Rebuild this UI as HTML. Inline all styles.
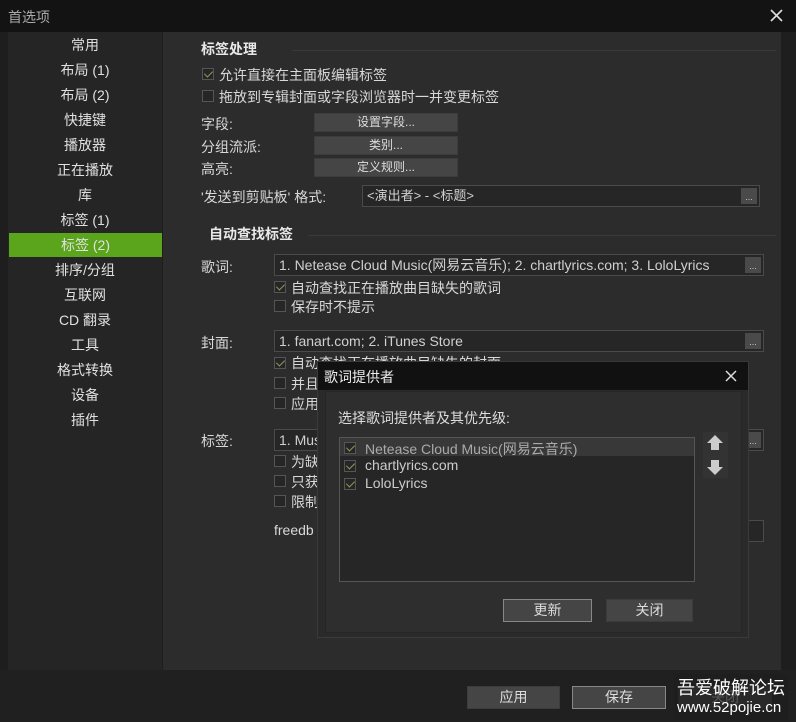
<!DOCTYPE html>
<html><head><meta charset="utf-8"><style>
*{margin:0;padding:0;box-sizing:border-box}
body{width:796px;height:722px;background:#1e1e1e;font-family:"Liberation Sans","Noto Sans CJK SC",sans-serif;font-size:13px;color:#d8d8d8;position:relative;overflow:hidden}
.a{position:absolute;white-space:nowrap}
.side{position:absolute;left:8px;top:32px;width:154px;height:638px;background:#252525}
.si{position:absolute;left:0;width:154px;text-align:center;font-size:14px;color:#e0e0e0;height:24px;line-height:24px}
.main{position:absolute;left:163px;top:32px;width:618px;height:638px;background:#2c2c2c}
.cb{position:absolute;width:12px;height:12px;border:1px solid #555;background:#262626}
.cb.c::after{content:"";position:absolute;left:3px;top:0px;width:4px;height:7px;border:solid #8a9a5a;border-width:0 1.5px 1.5px 0;transform:rotate(45deg)}
.btn{position:absolute;background:#454545;border:1px solid #3c3c3c;color:#ddd;text-align:center;font-size:12px}
.inp{position:absolute;background:#262626;border:1px solid #4a4a4a;color:#d0d0d0;font-size:14px;padding-left:4px;line-height:20px;height:22px}
.dots{position:absolute;right:2px;top:2px;width:16px;height:16px;background:#4a4a4a;font-size:9px;line-height:18px;text-align:center;color:#ccc}
.hr{position:absolute;height:1px;background:#3a3a3a}
</style></head><body>
<div class="a" style="left:0;top:0;width:796px;height:32px;background:#131313"></div>
<div class="a" style="left:8px;top:7px;font-size:14px;color:#aaa">首选项</div>
<svg class="a" style="left:770px;top:9px" width="13" height="13" viewBox="0 0 13 13"><path d="M1 1L12 12M12 1L1 12" stroke="#ddd" stroke-width="1.6"/></svg>
<div class="side">
<div class="si" style="top:1px">常用</div>
<div class="si" style="top:26px">布局 (1)</div>
<div class="si" style="top:51px">布局 (2)</div>
<div class="si" style="top:76px">快捷键</div>
<div class="si" style="top:101px">播放器</div>
<div class="si" style="top:126px">正在播放</div>
<div class="si" style="top:151px">库</div>
<div class="si" style="top:176px">标签 (1)</div>
<div class="si" style="top:201px;background:#5ba51c;left:1px;width:153px">标签 (2)</div>
<div class="si" style="top:226px">排序/分组</div>
<div class="si" style="top:251px">互联网</div>
<div class="si" style="top:276px">CD 翻录</div>
<div class="si" style="top:301px">工具</div>
<div class="si" style="top:326px">格式转换</div>
<div class="si" style="top:351px">设备</div>
<div class="si" style="top:376px">插件</div>
</div>
<div class="main"></div>
<div class="a" style="left:201px;top:39px;font-size:14px;font-weight:bold;color:#e8e8e8">标签处理</div>
<div class="hr" style="left:292px;top:50px;width:484px"></div>
<div class="cb c" style="left:202px;top:68px"></div><div class="a" style="left:219px;top:65px;font-size:14px">允许直接在主面板编辑标签</div>
<div class="cb" style="left:202px;top:90px"></div><div class="a" style="left:219px;top:87px;font-size:14px">拖放到专辑封面或字段浏览器时一并变更标签</div>
<div class="a" style="left:201px;top:114px;font-size:14px">字段:</div>
<div class="btn" style="left:314px;top:113px;width:144px;height:19px;line-height:17px">设置字段...</div>
<div class="a" style="left:201px;top:137px;font-size:14px">分组流派:</div>
<div class="btn" style="left:314px;top:136px;width:144px;height:19px;line-height:17px">类别...</div>
<div class="a" style="left:201px;top:159px;font-size:14px">高亮:</div>
<div class="btn" style="left:314px;top:158px;width:144px;height:19px;line-height:17px">定义规则...</div>
<div class="a" style="left:201px;top:187px;font-size:14px">'发送到剪贴板' 格式:</div>
<div class="inp" style="left:362px;top:185px;width:398px;height:22px;font-size:13px">&lt;演出者&gt; - &lt;标题&gt;<div class="dots">...</div></div>
<div class="a" style="left:209px;top:224px;font-size:14px;font-weight:bold;color:#e8e8e8">自动查找标签</div>
<div class="hr" style="left:308px;top:235px;width:468px"></div>
<div class="a" style="left:201px;top:257px;font-size:14px">歌词:</div>
<div class="inp" style="left:274px;top:254px;width:490px">1. Netease Cloud Music(网易云音乐); 2. chartlyrics.com; 3. LoloLyrics<div class="dots">...</div></div>
<div class="cb c" style="left:274px;top:281px"></div><div class="a" style="left:291px;top:278px;font-size:14px">自动查找正在播放曲目缺失的歌词</div>
<div class="cb" style="left:274px;top:300px"></div><div class="a" style="left:291px;top:297px;font-size:14px">保存时不提示</div>
<div class="a" style="left:201px;top:333px;font-size:14px">封面:</div>
<div class="inp" style="left:274px;top:330px;width:490px">1. fanart.com; 2. iTunes Store<div class="dots">...</div></div>
<div class="cb c" style="left:274px;top:357px"></div><div class="a" style="left:291px;top:353px;font-size:14px">自动查找正在播放曲目缺失的封面</div>
<div class="cb" style="left:274px;top:377px"></div><div class="a" style="left:291px;top:374px;font-size:14px">并且</div>
<div class="cb" style="left:274px;top:397px"></div><div class="a" style="left:291px;top:394px;font-size:14px">应用</div>
<div class="a" style="left:201px;top:431px;font-size:14px">标签:</div>
<div class="inp" style="left:274px;top:429px;width:490px">1. Music<div class="dots">...</div></div>
<div class="cb" style="left:274px;top:455px"></div><div class="a" style="left:291px;top:452px;font-size:14px">为缺</div>
<div class="cb" style="left:274px;top:475px"></div><div class="a" style="left:291px;top:472px;font-size:14px">只获</div>
<div class="cb" style="left:274px;top:495px"></div><div class="a" style="left:291px;top:492px;font-size:14px">限制</div>
<div class="a" style="left:274px;top:522px;font-size:14px">freedb</div>
<div class="inp" style="left:700px;top:520px;width:64px"></div>

<div class="a" style="left:0;top:670px;width:796px;height:52px;background:#202020"></div>
<div class="btn" style="left:467px;top:686px;width:93px;height:23px;line-height:21px;font-size:14px">应用</div>
<div class="btn" style="left:572px;top:686px;width:94px;height:23px;line-height:21px;font-size:14px;border-color:#888">保存</div>
<div class="btn" style="left:678px;top:686px;width:94px;height:23px;line-height:21px;font-size:14px">关闭</div>
<div class="a" style="left:674px;top:674px;width:114px;height:46px;background:rgba(30,30,30,.7)"></div>
<div class="a" style="left:677px;top:674px;font-size:18px;color:#fff">吾爱破解论坛</div>
<div class="a" style="left:677px;top:699px;font-size:15px;color:#fff">www.52pojie.cn</div>

<!-- dialog -->
<div class="a" style="left:317px;top:361px;width:432px;height:277px;background:#2a2a2a;border:1px solid #3a3a3a"></div>
<div class="a" style="left:318px;top:362px;width:430px;height:28px;background:#111"></div>
<div class="a" style="left:324px;top:367px;font-size:14px;color:#eee">歌词提供者</div>
<svg class="a" style="left:725px;top:370px" width="12" height="12" viewBox="0 0 12 12"><path d="M1 1L11 11M11 1L1 11" stroke="#ddd" stroke-width="1.5"/></svg>
<div class="a" style="left:325px;top:391px;width:417px;height:242px;background:#2e2e2e;border:1px solid #262626"></div>
<div class="a" style="left:338px;top:408px;font-size:14px;color:#ddd">选择歌词提供者及其优先级:</div>
<div class="a" style="left:339px;top:437px;width:356px;height:145px;background:#262626;border:1px solid #555"></div>
<div class="a" style="left:340px;top:438px;width:354px;height:18px;background:#383838"></div>
<div class="cb c" style="left:344px;top:442px"></div><div class="a" style="left:365px;top:439px;font-size:14px;color:#aaa">Netease Cloud Music(网易云音乐)</div>
<div class="cb c" style="left:344px;top:460px"></div><div class="a" style="left:365px;top:457px;font-size:14px;color:#ccc">chartlyrics.com</div>
<div class="cb c" style="left:344px;top:478px"></div><div class="a" style="left:365px;top:475px;font-size:14px;color:#ccc">LoloLyrics</div>
<div class="a" style="left:703px;top:432px;width:25px;height:46px;background:#333"></div>
<svg class="a" style="left:705px;top:433px" width="20" height="44" viewBox="0 0 20 44"><path d="M10 2L2 10H6V17H14V10H18Z" fill="#ccc"/><path d="M10 42L2 34H6V27H14V34H18Z" fill="#ccc"/></svg>
<div class="btn" style="left:503px;top:599px;width:89px;height:23px;line-height:21px;font-size:14px;border-color:#888">更新</div>
<div class="btn" style="left:606px;top:599px;width:87px;height:23px;line-height:21px;font-size:14px">关闭</div>
</body></html>
